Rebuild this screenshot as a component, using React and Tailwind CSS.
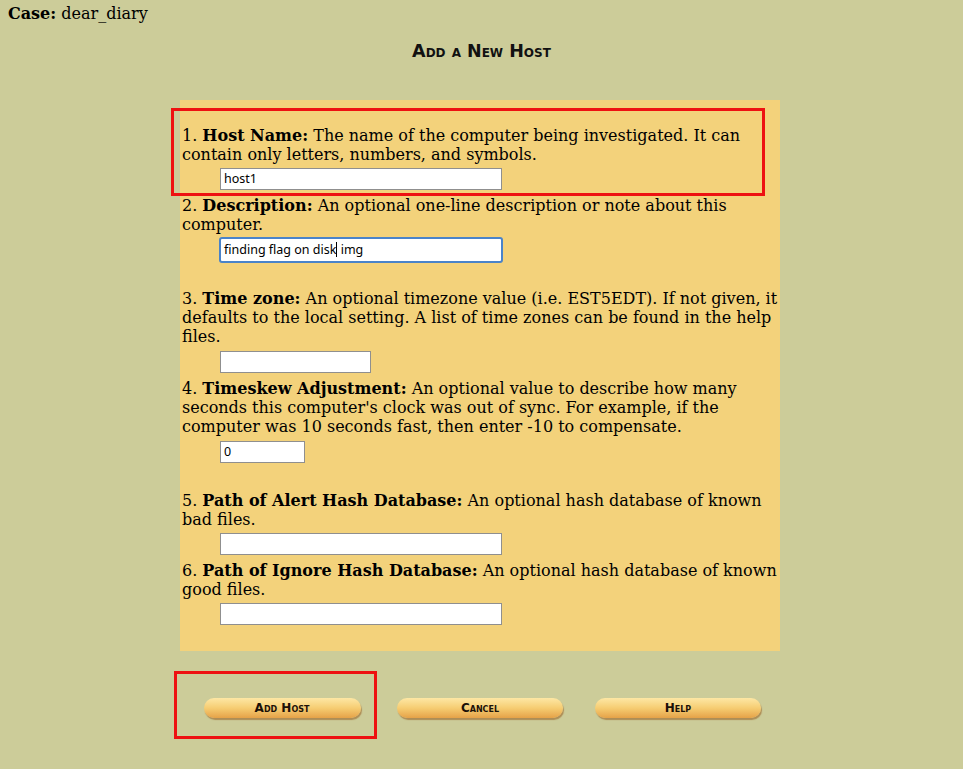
import React from "react";

const serif = { fontFamily: '"DejaVu Serif", serif' };

function Field({ num, label, text, mt }) {
  return (
    <div className={mt}>
      <div className="text-[16px] leading-[19px] text-black" style={serif}>
        {num}. <b>{label}</b> {text}
      </div>
    </div>
  );
}

function TextBox({ w, value, focused, mt = "mt-[4px]", caret }) {
  if (focused) {
    return (
      <div className={`${mt} ml-[37px] ${w} h-[26px] rounded-[3px] border-2 border-[#4a83c9] bg-white flex items-center px-[3px]`}>
        <span className="text-[12.5px] text-black font-['Noto_Sans',sans-serif]">
          {value.slice(0, caret)}
          <span className="inline-block w-px h-[15px] bg-black align-middle -mt-[2px]"></span>
          {value.slice(caret)}
        </span>
      </div>
    );
  }
  return (
    <div className={`${mt} ml-[38px] ${w} h-[22px] border border-[#8f8f8f] bg-white flex items-center px-[3px]`}>
      <span className="text-[12.5px] text-black font-['Noto_Sans',sans-serif]">{value}</span>
    </div>
  );
}

function PillButton({ label, w }) {
  return (
    <div
      className={`${w} h-[20px] rounded-full flex items-center justify-center bg-gradient-to-b from-[#fde7a4] via-[#f6cd72] to-[#e5a248] shadow-[1px_2px_1px_rgba(150,90,30,0.55)]`}
    >
      <span className="text-[12px] font-bold text-[#1b1108] [font-variant:small-caps] font-['DejaVu_Sans',sans-serif] leading-none">
        {label}
      </span>
    </div>
  );
}

export default function App() {
  return (
    <div className="min-h-[769px] w-full bg-[#cccc99] relative">
      <div className="pl-[8px] pt-[4px] text-[16px] leading-[19px] text-black" style={serif}>
        <b>Case:</b> dear_diary
      </div>

      <div className="mt-[18px] flex justify-center">
        <span className="text-[17.5px] font-bold [font-variant:small-caps] text-[#111] leading-[20px] font-['DejaVu_Sans',sans-serif]">
          Add a New Host
        </span>
      </div>

      <div className="mt-[39px] ml-[180px] w-[600px] bg-[#f3d27b] pt-[26px] pb-[26px] px-[2px]">
        <Field num="1" label="Host Name:" text="The name of the computer being investigated. It can contain only letters, numbers, and symbols." />
        <TextBox w="w-[282px]" value="host1" />

        <Field mt="mt-[6px]" num="2" label="Description:" text="An optional one-line description or note about this computer." />
        <TextBox w="w-[284px]" value="finding flag on disk img" focused caret={20} mt="mt-[3px]" />

        <Field mt="mt-[26px]" num="3" label="Time zone:" text="An optional timezone value (i.e. EST5EDT). If not given, it defaults to the local setting. A list of time zones can be found in the help files." />
        <TextBox w="w-[151px]" value="" mt="mt-[5px]" />

        <Field mt="mt-[6px]" num="4" label="Timeskew Adjustment:" text="An optional value to describe how many seconds this computer's clock was out of sync. For example, if the computer was 10 seconds fast, then enter -10 to compensate." />
        <TextBox w="w-[85px]" value="0" mt="mt-[5px]" />

        <Field mt="mt-[28px]" num="5" label="Path of Alert Hash Database:" text="An optional hash database of known bad files." />
        <TextBox w="w-[282px]" value="" />

        <Field mt="mt-[6px]" num="6" label="Path of Ignore Hash Database:" text="An optional hash database of known good files." />
        <TextBox w="w-[282px]" value="" />
      </div>

      <div className="mt-[47px] ml-[183px] w-[594px] grid grid-cols-3">
        <div className="flex justify-center"><PillButton label="Add Host" w="w-[157px]" /></div>
        <div className="flex justify-center"><PillButton label="Cancel" w="w-[166px]" /></div>
        <div className="flex justify-center"><PillButton label="Help" w="w-[166px]" /></div>
      </div>

      <div className="absolute left-[171px] top-[108px] w-[594px] h-[88px] border-[3px] border-[#ee1111] pointer-events-none"></div>
      <div className="absolute left-[174px] top-[671px] w-[203px] h-[68px] border-[3px] border-[#ee1111] pointer-events-none"></div>
    </div>
  );
}
